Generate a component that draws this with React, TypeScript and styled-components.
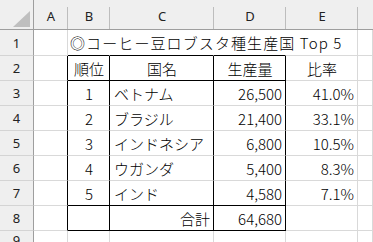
import React from "react";
import styled, { createGlobalStyle, css } from "styled-components";

const GlobalStyle = createGlobalStyle`
  html, body { margin: 0; padding: 0; background: #fff; }
  body {
    font-family: "Noto Sans CJK JP", "Noto Sans", sans-serif;
    overflow: hidden;
  }
`;

const GRID = "#d9d9d9";
const HEAD_BG = "#efefef";
const HEAD_LINE = "#9e9e9e";

const Sheet = styled.div`
  display: grid;
  grid-template-columns: 34px 34px 42px 104px 72px 72px 1fr;
  grid-template-rows: 30px 26px repeat(7, 25px) 1fr;
  width: 373px;
  height: 242px;
  overflow: hidden;
`;

const Corner = styled.div`
  background: ${HEAD_BG};
  border-right: 1px solid ${HEAD_LINE};
  border-bottom: 1px solid ${HEAD_LINE};
  box-sizing: border-box;
  display: flex;
  align-items: flex-end;
  justify-content: flex-end;
  padding: 0 3px 2px 0;
`;

const ColHead = styled.div<{ $last?: boolean }>`
  position: relative;
  background: ${HEAD_BG};
  border-bottom: 1px solid ${HEAD_LINE};
  box-sizing: border-box;
  display: flex;
  align-items: center;
  justify-content: center;
  font-family: "Noto Sans", "Noto Sans CJK JP", sans-serif;
  font-size: 13px;
  color: #222;
  padding-top: 2px;
  ${(p) =>
    !p.$last &&
    css`
      &::after {
        content: "";
        position: absolute;
        right: 0;
        top: 7px;
        bottom: 0;
        width: 1px;
        background: #bdbdbd;
      }
    `}
`;

const RowHead = styled.div`
  background: ${HEAD_BG};
  border-right: 1px solid ${HEAD_LINE};
  border-bottom: 1px solid #d4d4d4;
  box-sizing: border-box;
  display: flex;
  align-items: center;
  justify-content: center;
  font-family: "Noto Sans", "Noto Sans CJK JP", sans-serif;
  font-size: 13px;
  color: #222;
`;

type Align = "left" | "center" | "right";

const Cell = styled.div<{
  $align?: Align;
  $bR?: boolean;
  $bB?: boolean;
  $noR?: boolean;
  $title?: boolean;
}>`
  box-sizing: border-box;
  display: flex;
  align-items: center;
  justify-content: ${(p) =>
    p.$align === "center" ? "center" : p.$align === "right" ? "flex-end" : "flex-start"};
  padding: 0 3px 0 4px;
  border-right: 1px solid ${(p) => (p.$bR ? "#000" : p.$noR ? "transparent" : GRID)};
  border-bottom: 1px solid ${(p) => (p.$bB ? "#000" : GRID)};
  font-size: 15px;
  font-weight: 300;
  color: #000;
  white-space: nowrap;
  overflow: ${(p) => (p.$title ? "visible" : "hidden")};
  position: relative;
  z-index: ${(p) => (p.$title ? 2 : 1)};
`;

const TitleText = styled.span`
  margin-left: -2px;
  letter-spacing: 1.1px;
`;

const Triangle = () => (
  <svg width="17" height="16" viewBox="0 0 17 16">
    <polygon points="0,16 17,0 17,16" fill="#bfbfbf" />
  </svg>
);

const cols = ["A", "B", "C", "D", "E", ""];

type Row = { n: number; country: string; amount: string; ratio: string };
const data: Row[] = [
  { n: 1, country: "ベトナム", amount: "26,500", ratio: "41.0%" },
  { n: 2, country: "ブラジル", amount: "21,400", ratio: "33.1%" },
  { n: 3, country: "インドネシア", amount: "6,800", ratio: "10.5%" },
  { n: 4, country: "ウガンダ", amount: "5,400", ratio: "8.3%" },
  { n: 5, country: "インド", amount: "4,580", ratio: "7.1%" },
];

export default function App() {
  return (
    <>
      <GlobalStyle />
      <Sheet>
        <Corner>
          <Triangle />
        </Corner>
        {cols.map((c, i) => (
          <ColHead key={i} $last={i === cols.length - 1}>
            {c}
          </ColHead>
        ))}

        {/* Row 1 */}
        <RowHead>1</RowHead>
        <Cell />
        <Cell $title $bB $noR>
          <TitleText>◎コーヒー豆ロブスタ種生産国 Top 5</TitleText>
        </Cell>
        <Cell $bB $noR />
        <Cell $bB $noR />
        <Cell />
        <Cell />

        {/* Row 2 */}
        <RowHead>2</RowHead>
        <Cell $bR />
        <Cell $align="center" $bR $bB>順位</Cell>
        <Cell $align="center" $bR $bB>国名</Cell>
        <Cell $align="center" $bR $bB>生産量</Cell>
        <Cell $align="center">比率</Cell>
        <Cell />

        {data.map((r, i) => (
          <React.Fragment key={r.n}>
            <RowHead>{i + 3}</RowHead>
            <Cell $bR />
            <Cell $align="center" $bR $bB={i === data.length - 1}>
              {r.n}
            </Cell>
            <Cell $bR $bB={i === data.length - 1}>
              {r.country}
            </Cell>
            <Cell $align="right" $bR $bB={i === data.length - 1}>
              {r.amount}
            </Cell>
            <Cell $align="right">{r.ratio}</Cell>
            <Cell />
          </React.Fragment>
        ))}

        {/* Row 8 */}
        <RowHead>8</RowHead>
        <Cell $bR />
        <Cell $bR $bB />
        <Cell $align="right" $bR $bB>合計</Cell>
        <Cell $align="right" $bR $bB>64,680</Cell>
        <Cell />
        <Cell />

        {/* Row 9 */}
        <RowHead>9</RowHead>
        <Cell />
        <Cell />
        <Cell />
        <Cell />
        <Cell />
        <Cell />
      </Sheet>
    </>
  );
}
